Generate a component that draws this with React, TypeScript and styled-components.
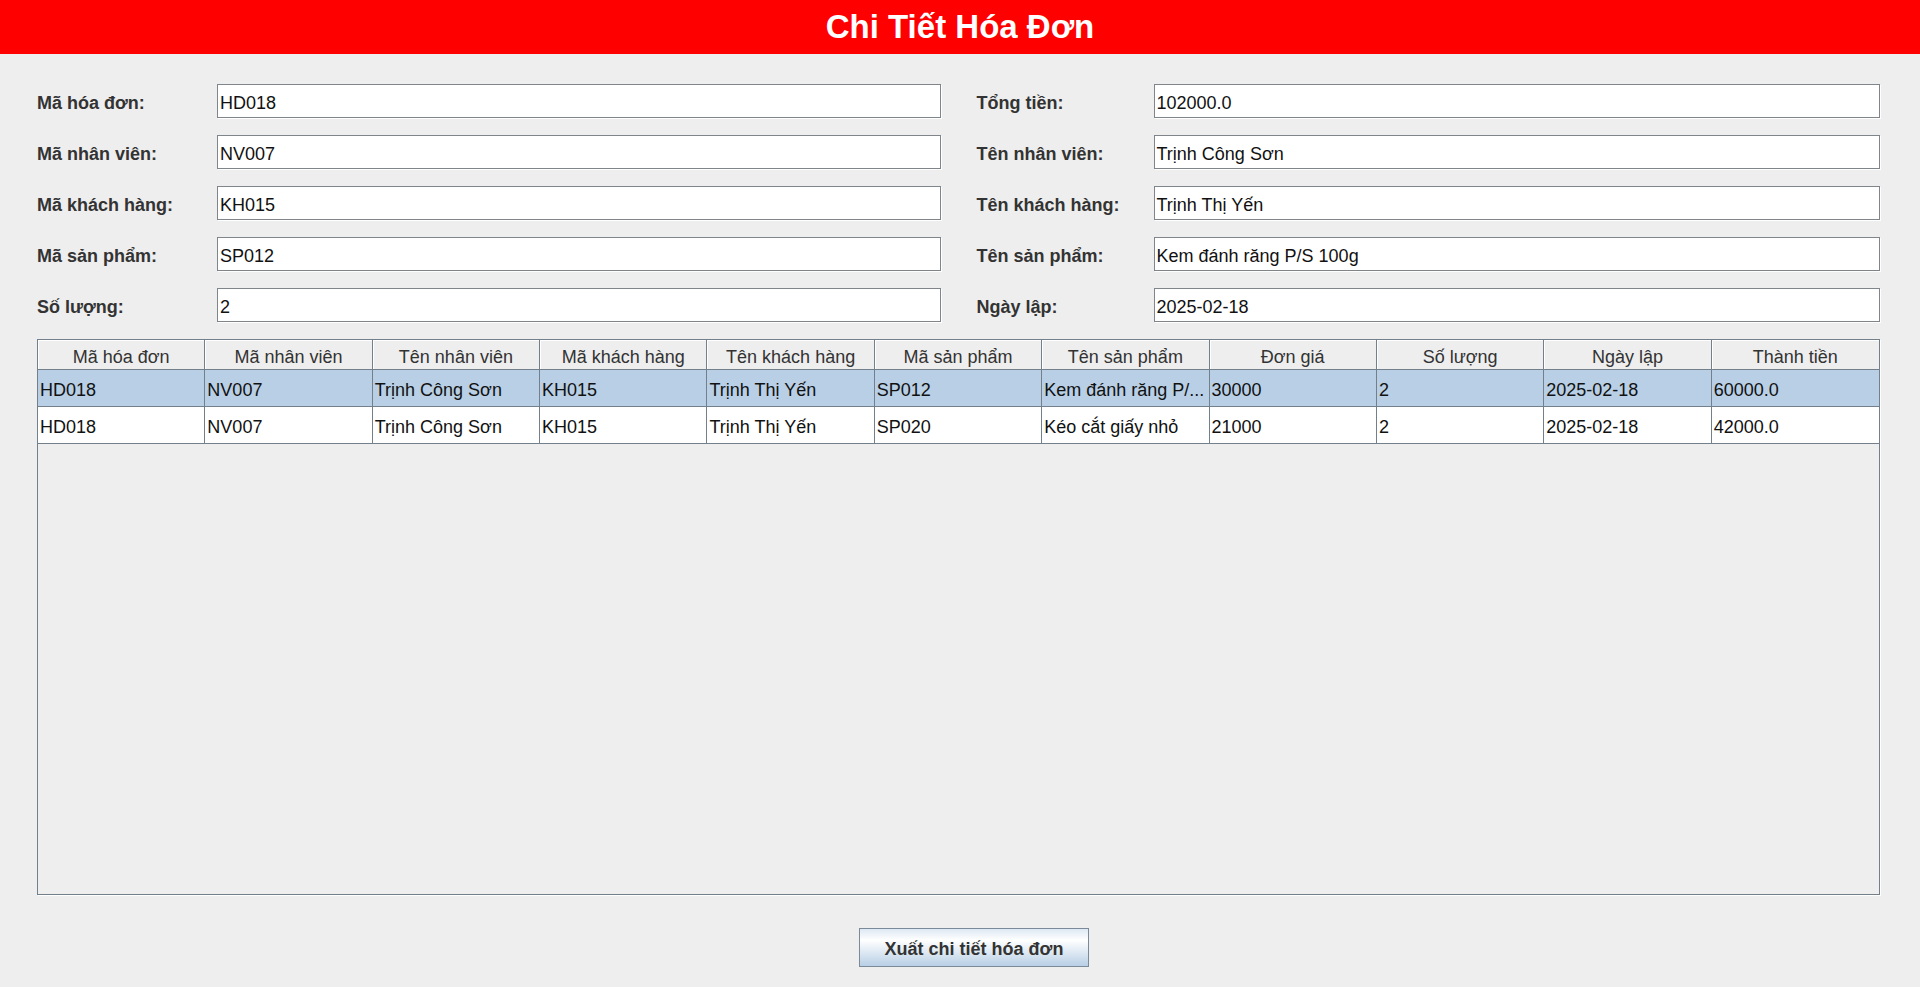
import React from "react";
import styled, { createGlobalStyle } from "styled-components";

const GlobalStyle = createGlobalStyle`
  html, body {
    margin: 0;
    padding: 0;
    background: #eeeeee;
    font-family: "Liberation Sans", Arial, sans-serif;
    overflow: hidden;
  }
  * { box-sizing: border-box; }
`;

const Page = styled.div`
  display: flex;
  flex-direction: column;
  width: 1920px;
  height: 987px;
  background: #eeeeee;
`;

const Header = styled.header`
  height: 54px;
  background: #ff0000;
  display: flex;
  align-items: center;
  justify-content: center;
  flex-shrink: 0;
`;

const Title = styled.h1`
  margin: 0;
  color: #ffffff;
  font-size: 33px;
  font-weight: bold;
  line-height: 1;
  padding-bottom: 2px;
`;

const Content = styled.main`
  display: flex;
  flex-direction: column;
  padding: 30px 40px 20px 37px;
`;

const Form = styled.section`
  display: grid;
  grid-template-columns: 1fr 1fr;
  column-gap: 36px;
  row-gap: 17px;
`;

const FieldRow = styled.div`
  display: flex;
  align-items: center;
  height: 34px;
`;

const Label = styled.label<{ $w: number }>`
  width: ${(p) => p.$w}px;
  flex-shrink: 0;
  font-size: 18px;
  font-weight: bold;
  color: #333333;
  padding-top: 5px;
`;

const Input = styled.div`
  flex: 1;
  height: 34px;
  background: #ffffff;
  border: 1px solid #7f858b;
  box-shadow: 1px 1px 0 #ffffff;
  display: flex;
  align-items: center;
  padding: 4px 0 0 2px;
  font-size: 18px;
  color: #111111;
  white-space: nowrap;
`;

const TableFrame = styled.div`
  margin-top: 17px;
  height: 556px;
  border: 1px solid #73808c;
  box-shadow: 1px 1px 0 #ffffff;
  background: #eeeeee;
  display: flex;
  flex-direction: column;
`;

const Row = styled.div<{ $head?: boolean; $selected?: boolean }>`
  display: grid;
  grid-template-columns: repeat(11, 1fr);
  height: ${(p) => (p.$head ? 30 : 37)}px;
  background: ${(p) => (p.$head ? "#eeeeee" : p.$selected ? "#b8cfe5" : "#ffffff")};
  border-bottom: 1px solid #73808c;
`;

const HeadCell = styled.div`
  display: flex;
  align-items: center;
  justify-content: center;
  font-size: 18px;
  color: #333333;
  border-right: 1px solid #73808c;
  box-shadow: inset 1px 1px 0 #ffffff;
  white-space: nowrap;
  overflow: hidden;
  padding-top: 5px;
  &:last-child { border-right: none; }
`;

const Cell = styled.div`
  display: flex;
  align-items: center;
  padding: 4px 0 0 2px;
  font-size: 18px;
  color: #111111;
  border-right: 1px solid #73808c;
  white-space: nowrap;
  overflow: hidden;
  &:last-child { border-right: none; }
`;

const Footer = styled.footer`
  margin-top: 33px;
  display: flex;
  justify-content: center;
  padding-left: 31px;
`;

const Button = styled.button`
  width: 230px;
  height: 39px;
  border: 1px solid #7a8a99;
  background: linear-gradient(#dde8f3 0%, #ffffff 30%, #b8cfe5 100%);
  font-family: "Liberation Sans", Arial, sans-serif;
  font-size: 18px;
  font-weight: bold;
  color: #333333;
  cursor: pointer;
  padding: 4px 0 0 0;
`;

const leftFields = [
  ["Mã hóa đơn:", "HD018"],
  ["Mã nhân viên:", "NV007"],
  ["Mã khách hàng:", "KH015"],
  ["Mã sản phẩm:", "SP012"],
  ["Số lượng:", "2"],
];

const rightFields = [
  ["Tổng tiền:", "102000.0"],
  ["Tên nhân viên:", "Trịnh Công Sơn"],
  ["Tên khách hàng:", "Trịnh Thị Yến"],
  ["Tên sản phẩm:", "Kem đánh răng P/S 100g"],
  ["Ngày lập:", "2025-02-18"],
];

const columns = [
  "Mã hóa đơn",
  "Mã nhân viên",
  "Tên nhân viên",
  "Mã khách hàng",
  "Tên khách hàng",
  "Mã sản phẩm",
  "Tên sản phẩm",
  "Đơn giá",
  "Số lượng",
  "Ngày lập",
  "Thành tiền",
];

const rows = [
  ["HD018", "NV007", "Trịnh Công Sơn", "KH015", "Trịnh Thị Yến", "SP012", "Kem đánh răng P/...", "30000", "2", "2025-02-18", "60000.0"],
  ["HD018", "NV007", "Trịnh Công Sơn", "KH015", "Trịnh Thị Yến", "SP020", "Kéo cắt giấy nhỏ", "21000", "2", "2025-02-18", "42000.0"],
];

export default function App() {
  const formItems: React.ReactNode[] = [];
  leftFields.forEach((lf, i) => {
    const rf = rightFields[i];
    formItems.push(
      <FieldRow key={`l${i}`}>
        <Label $w={180}>{lf[0]}</Label>
        <Input>{lf[1]}</Input>
      </FieldRow>
    );
    formItems.push(
      <FieldRow key={`r${i}`}>
        <Label $w={177}>{rf[0]}</Label>
        <Input>{rf[1]}</Input>
      </FieldRow>
    );
  });

  return (
    <>
      <GlobalStyle />
      <Page>
        <Header>
          <Title>Chi Tiết Hóa Đơn</Title>
        </Header>
        <Content>
          <Form>{formItems}</Form>
          <TableFrame>
            <Row $head>
              {columns.map((c) => (
                <HeadCell key={c}>{c}</HeadCell>
              ))}
            </Row>
            {rows.map((r, i) => (
              <Row key={i} $selected={i === 0}>
                {r.map((v, j) => (
                  <Cell key={j}>{v}</Cell>
                ))}
              </Row>
            ))}
          </TableFrame>
          <Footer>
            <Button>Xuất chi tiết hóa đơn</Button>
          </Footer>
        </Content>
      </Page>
    </>
  );
}
